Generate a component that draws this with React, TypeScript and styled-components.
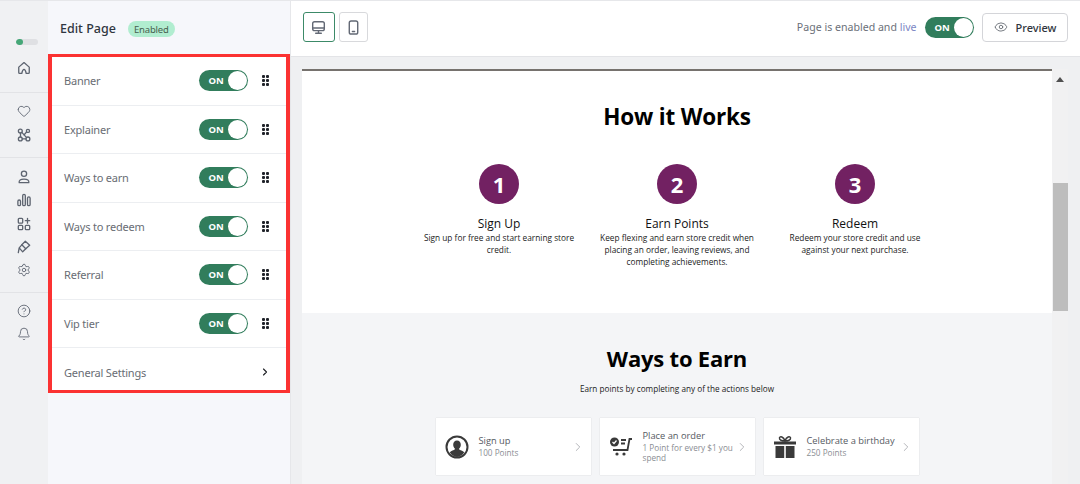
import React from "react";
import styled, { createGlobalStyle } from "styled-components";
import { Eye, ChevronRight, Heart, Settings, CircleHelp, Bell } from "lucide-react";

const Global = createGlobalStyle`
  html, body { margin: 0; padding: 0; width: 1080px; height: 484px; overflow: hidden; }
  body { font-family: "Noto Sans", "Open Sans", sans-serif; }
  * { box-sizing: border-box; }
`;

const Page = styled.div`
  display: flex; width: 1080px; height: 484px; overflow: hidden; background: #eff0f2;
`;
const Rail = styled.nav`
  width: 48px; flex: none; background: #f0f1f3; display: flex; flex-direction: column;
  border-top: 1px solid #e6e7ea; color: #5d6470;
`;
const RailGroup = styled.div<{ $h: number; $pt: number; $gap: number; $line?: boolean }>`
  height: ${p => p.$h}px; padding-top: ${p => p.$pt}px; display: flex; flex-direction: column;
  align-items: center; gap: ${p => p.$gap}px;
  border-bottom: ${p => (p.$line ? "1px solid #e2e3e6" : "0")};
  flex: none;
`;
const Progress = styled.div`
  width: 22px; height: 6px; border-radius: 3px; background: #dfe0e3; overflow: hidden; margin: 0 0 16px 6px;
  &::before { content: ""; display: block; width: 7px; height: 6px; background: #45a777; border-radius: 3px; }
`;
const RailIcon = styled.svg`
  width: 14px; height: 14px; flex: none; fill: none; stroke: currentColor; stroke-width: 1.5; stroke-linecap: round; stroke-linejoin: round;
`;
const Panel = styled.aside`
  width: 243px; flex: none; background: #f6f7fb; border-right: 1px solid #e6e7ea; border-top: 1px solid #e6e7ea;
  display: flex; flex-direction: column;
`;
const PanelHead = styled.header`
  height: 53px; flex: none; display: flex; align-items: center; gap: 12px; padding: 3px 0 0 12px;
`;
const PanelTitle = styled.h1`
  margin: 0; font-size: 12.5px; font-weight: 500; color: #2f3640; line-height: 18px;
`;
const Badge = styled.span`
  height: 16px; width: 47px; border-radius: 8px; background: #b1edd0; color: #47604f; font-size: 9.5px; letter-spacing: -0.2px;
  display: flex; align-items: center; justify-content: center;
`;
const List = styled.div`
  width: 242px; height: 339px; border: 4px solid #fb3232; border-top-width: 3px; border-bottom-width: 3px; background: #fff; display: flex; flex-direction: column; overflow: hidden;
`;
const Row = styled.div`
  height: 48.5px; flex: none; display: flex; align-items: center; padding: 0 17px 0 12px;
  border-bottom: 1px solid #eceef1;
`;
const SettingsRow = styled.div`
  flex: 1; display: flex; align-items: center; padding: 6px 15px 0 12px; color: #1d1f24;
`;
const RowLabel = styled.span`
  flex: 1; font-size: 11px; color: #696d74; letter-spacing: -0.2px;
`;
const Toggle = styled.span`
  width: 49.5px; height: 21px; border-radius: 11px; background: #317d5c; display: inline-flex; align-items: center;
  justify-content: space-between; padding: 0 1.5px 0 10px; flex: none; color: #fff; font-size: 9.5px; font-weight: 700;
  &::after { content: ""; width: 19px; height: 19px; border-radius: 50%; background: #fff; }
`;
const Grip = styled.span`
  width: 7.5px; height: 11px; margin-left: 13.5px; flex: none; display: grid; grid-template-columns: repeat(2, 3px); grid-auto-rows: 3px; gap: 1px 1.5px;
  i { background: #20232a; border-radius: 1px; }
`;
const Main = styled.main`
  flex: 1; display: flex; flex-direction: column; min-width: 0;
`;
const Toolbar = styled.div`
  height: 57px; flex: none; background: #fff; border-top: 1px solid #e6e7ea; border-bottom: 1px solid #e3e4e7;
  display: flex; align-items: center; padding: 0 12px 3px 12px;
`;
const DeviceBtn = styled.button<{ $active?: boolean }>`
  height: 30px; width: ${p => (p.$active ? 31.5 : 29.5)}px; margin-right: 4px; border-radius: 3px; padding: 0; background: #fff;
  border: ${p => (p.$active ? "1.5px solid #3c8a68" : "1px solid #d8d9dc")}; color: #636975;
  display: flex; align-items: center; justify-content: center;
`;
const Spacer = styled.div` flex: 1; `;
const Status = styled.span`
  font-size: 10.6px; color: #6b7079; margin-right: 8px;
  b { font-weight: 400; color: #7c86c4; }
`;
const PreviewBtn = styled.button`
  margin-left: 8px; width: 86px; height: 29px; border: 1px solid #d4d5d9; border-radius: 4px; background: #fff;
  display: flex; align-items: center; justify-content: center; gap: 8px; font: 500 11px "Noto Sans", sans-serif; color: #30353d; padding: 0;
  svg { color: #666b73; }
`;
const Stage = styled.div`
  flex: 1; min-height: 0; display: flex; padding: 12px 0 0 11px; overflow: hidden;
`;
const Preview = styled.div`
  width: 750px; flex: none; background: #fff; border-top: 2px solid #76726e; font-family: "Open Sans", "Noto Sans", sans-serif;
`;
const Scrollbar = styled.div`
  width: 16px; flex: none; background: #f1f1f2; display: flex; flex-direction: column; align-items: center; padding-top: 8px;
  &::before { content: ""; width: 0; height: 0; border: 4.5px solid transparent; border-top: 0; border-bottom: 5px solid #505050; }
`;
const Thumb = styled.div`
  width: 15px; height: 128px; margin: 101px 0 0 1px; background: #bdbdbd; flex: none;
`;
const WhiteSec = styled.section`
  height: 242px; padding-top: 31px; display: flex; flex-direction: column; align-items: center;
`;
const BigTitle = styled.h2<{ $size: number }>`
  margin: 0; font-size: ${p => p.$size}px; line-height: 30px; font-weight: 700; color: #000; letter-spacing: -0.2px;
  font-family: "Open Sans", sans-serif;
`;
const Steps = styled.div`
  display: flex; gap: 18px; margin-top: 32px;
`;
const Step = styled.div`
  width: 160px; display: flex; flex-direction: column; align-items: center; text-align: center;
`;
const Num = styled.div`
  width: 40px; height: 40px; border-radius: 50%; background: #722162; color: #fff; font-size: 22px; font-weight: 700;
  display: flex; align-items: center; justify-content: center; margin-bottom: 11px;
`;
const StepName = styled.div`
  font-size: 12px; line-height: 17px; color: #111;
`;
const StepText = styled.p`
  margin: 0; font-size: 8.3px; line-height: 12.2px; color: #222; white-space: pre-line;
`;
const GreySec = styled.section`
  background: #f4f5f7; height: 200px; padding-top: 30px; display: flex; flex-direction: column; align-items: center;
`;
const Sub = styled.p`
  margin: 10px 0 0; font-size: 8.2px; line-height: 12px; color: #222;
`;
const Cards = styled.div`
  display: flex; gap: 9px; margin-top: 23px;
`;
const Card = styled.div`
  width: 155px; height: 57px; background: #fff; box-shadow: 0 0 1px rgba(0,0,0,.2); display: flex; align-items: center; padding: 0 6px 0 9px;
`;
const CardBody = styled.div`
  flex: 1; margin-left: 10px; min-width: 0; display: flex; flex-direction: column; justify-content: center;
`;
const CardTitle = styled.div`
  font-size: 9.3px; line-height: 12px; color: #555a62; white-space: nowrap;
`;
const CardSub = styled.div`
  font-size: 8.2px; line-height: 10px; color: #8a8d93; margin-top: 1px; white-space: pre-line;
`;
const CardIconBox = styled.svg`
  width: 24px; height: 24px; flex: none; color: #3a3a3a;
`;

const Drag = () => (
  <Grip>{[0, 1, 2, 3, 4, 5].map(i => <i key={i} />)}</Grip>
);

const sections = ["Banner", "Explainer", "Ways to earn", "Ways to redeem", "Referral", "Vip tier"];

const earn = [
  { t: "Sign up", s: "100 Points", icon: (
    <CardIconBox viewBox="0 0 24 24">
      <circle cx="12" cy="12" r="10.5" fill="none" stroke="currentColor" strokeWidth="2" />
      <path fill="currentColor" d="M12 5.500c2.400 0 3.800 1.800 3.800 4.200 0 1.700-.8 3.200-1.800 4 .2 1 1.400 1.400 3 2 1 .4 1.800 1 2.200 1.800A10 10 0 0 1 12 22a10 10 0 0 1-7.200-4.500c.4-.8 1.200-1.400 2.200-1.800 1.600-.6 2.800-1 3-2-1-.8-1.800-2.300-1.800-4C8.200 7.300 9.600 5.500 12 5.500z" />
    </CardIconBox>
  ) },
  { t: "Place an order", s: "1 Point for every $1 you\nspend", icon: (
    <CardIconBox viewBox="0 0 24 24">
      <circle cx="5.500" cy="7" r="4.500" fill="currentColor" />
      <path d="M3.500 7l1.500 1.500L7.500 5.500" fill="none" stroke="#fff" strokeWidth="1.200" />
      <path d="M12 5h5M12 8.500h4" stroke="currentColor" strokeWidth="1.800" fill="none" />
      <path d="M23 4h-2.500l-2 11H4" stroke="currentColor" strokeWidth="1.800" fill="none" />
      <circle cx="8" cy="19" r="1.600" fill="currentColor" /><circle cx="15" cy="19" r="1.600" fill="currentColor" />
    </CardIconBox>
  ) },
  { t: "Celebrate a birthday", s: "250 Points", icon: (
    <CardIconBox viewBox="0 0 24 24">
      <path fill="currentColor" d="M1 6.500h22v3H1zM2.500 11h8.700v12H2.500zM12.800 11h8.700v12h-8.700z" />
      <path fill="none" stroke="currentColor" strokeWidth="1.500" d="M12 6C9 6 6 5 6.500 2.800 7 1 10.500 1.500 12 6c1.500-4.500 5-5 5.500-3.200C18 5 15 6 12 6z" />
    </CardIconBox>
  ) },
];

export default function App() {
  return (
    <Page>
      <Global />
      <Rail>
        <RailGroup $h={92} $pt={38} $gap={0} $line>
          <Progress />
          <RailIcon viewBox="0 0 16 16"><path d="M8 1.800 2 7v6.200a1 1 0 0 0 1 1h2.500c.6-3.500 1-4.700 2.500-4.700s1.900 1.200 2.500 4.700H13a1 1 0 0 0 1-1V7z" /></RailIcon>
        </RailGroup>
        <RailGroup $h={65} $pt={11} $gap={10} $line>
          <Heart size={14} strokeWidth={1.5} />
          <RailIcon viewBox="0 0 16 16"><circle cx="3.800" cy="3.500" r="2.200" /><circle cx="12.500" cy="3.300" r="1.800" /><circle cx="3.800" cy="12.500" r="2.200" /><circle cx="12.500" cy="12.500" r="2.200" /><path d="M5.500 5 11 11M11 4.500 8 8M4 6v4M6 12.500h4" /></RailIcon>
        </RailGroup>
        <RailGroup $h={135} $pt={12} $gap={9.3} $line>
          <RailIcon viewBox="0 0 16 16"><circle cx="8" cy="4.200" r="3" /><path d="M2.500 14.500c-.5-3 1.500-4 5.500-4s6 1 5.500 4z" /></RailIcon>
          <RailIcon viewBox="0 0 16 16"><rect x="1" y="8" width="3" height="6.500" rx="1.500" /><rect x="6.500" y="1.500" width="3" height="13" rx="1.500" /><rect x="12" y="4.500" width="3" height="10" rx="1.500" /></RailIcon>
          <RailIcon viewBox="0 0 16 16"><rect x="1.500" y="1.500" width="5" height="5.500" rx="1" /><rect x="1.500" y="9.500" width="5" height="5" rx="1" /><rect x="9.500" y="9.500" width="5" height="5" rx="1" /><path d="M12 1.500v5.500M9.500 4.200h5" /></RailIcon>
          <RailIcon viewBox="0 0 16 16"><path d="M9.500 1.500 14.500 6 10 10 5.500 5.500z" /><path d="M5.500 5.500 2.500 9l4 4.500 3.500-3.500M2.500 9 1.500 14.500" /></RailIcon>
          <Settings size={14} strokeWidth={1.5} />
        </RailGroup>
        <RailGroup $h={80} $pt={11} $gap={9}>
          <CircleHelp size={14} strokeWidth={1.5} />
          <Bell size={14} strokeWidth={1.5} />
        </RailGroup>
      </Rail>
      <Panel>
        <PanelHead>
          <PanelTitle>Edit Page</PanelTitle>
          <Badge>Enabled</Badge>
        </PanelHead>
        <List>
          {sections.map(s => (
            <Row key={s}>
              <RowLabel>{s}</RowLabel>
              <Toggle>ON</Toggle>
              <Drag />
            </Row>
          ))}
          <SettingsRow>
            <RowLabel>General Settings</RowLabel>
            <ChevronRight size={12} strokeWidth={2.2} />
          </SettingsRow>
        </List>
      </Panel>
      <Main>
        <Toolbar>
          <DeviceBtn $active>
            <svg width="15" height="15" viewBox="0 0 16 16" fill="none" stroke="currentColor" strokeWidth="1.500" strokeLinecap="round" strokeLinejoin="round"><rect x="1.800" y="1.800" width="12.400" height="9.500" rx="2" /><path d="M2 8.500h12M8 11.500v2.500M5 14.200h6" /></svg>
          </DeviceBtn>
          <DeviceBtn>
            <svg width="15" height="15" viewBox="0 0 16 16" fill="none" stroke="currentColor" strokeWidth="1.500" strokeLinecap="round"><rect x="3.500" y="1" width="9" height="14" rx="2" /><path d="M6.800 12.200h2.400" /></svg>
          </DeviceBtn>
          <Spacer />
          <Status>Page is enabled and <b>live</b></Status>
          <Toggle>ON</Toggle>
          <PreviewBtn><Eye size={14} strokeWidth={1.5} />Preview</PreviewBtn>
        </Toolbar>
        <Stage>
          <Preview>
            <WhiteSec>
              <BigTitle $size={22.5}>How it Works</BigTitle>
              <Steps>
                <Step><Num>1</Num><StepName>Sign Up</StepName><StepText>{"Sign up for free and start earning store\ncredit."}</StepText></Step>
                <Step><Num>2</Num><StepName>Earn Points</StepName><StepText>{"Keep flexing and earn store credit when\nplacing an order, leaving reviews, and\ncompleting achievements."}</StepText></Step>
                <Step><Num>3</Num><StepName>Redeem</StepName><StepText>{"Redeem your store credit and use\nagainst your next purchase."}</StepText></Step>
              </Steps>
            </WhiteSec>
            <GreySec>
              <BigTitle $size={22}>Ways to Earn</BigTitle>
              <Sub>Earn points by completing any of the actions below</Sub>
              <Cards>
                {earn.map(c => (
                  <Card key={c.t}>
                    {c.icon}
                    <CardBody>
                      <CardTitle>{c.t}</CardTitle>
                      <CardSub>{c.s}</CardSub>
                    </CardBody>
                    <ChevronRight size={14} strokeWidth={1.5} color="#a9abb0" />
                  </Card>
                ))}
              </Cards>
            </GreySec>
          </Preview>
          <Scrollbar><Thumb /></Scrollbar>
        </Stage>
      </Main>
    </Page>
  );
}
